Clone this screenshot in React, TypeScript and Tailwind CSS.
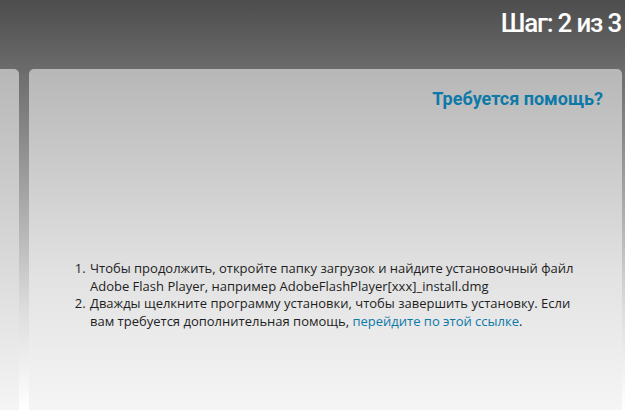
import React from "react";

export default function App() {
  return (
    <div className="w-[625px] h-[410px] overflow-hidden flex flex-col" style={{ fontFamily: "Roboto, 'Open Sans', sans-serif" }}>
      <header className="h-[69px] shrink-0 bg-gradient-to-b from-[#4d4d4d] to-[#6b6b6b] flex justify-end items-start pt-[8px] pr-[4px]">
        <h1 className="text-white text-[26px] leading-[30px] font-medium tracking-[-1.2px]" style={{ fontFamily: "Roboto, sans-serif" }}>
          Шаг: 2 из 3
        </h1>
      </header>
      <div className="flex-1 flex gap-[10px] pr-[3px] bg-gradient-to-b from-[#6b6b6b] via-[#dcdcdc] via-70% to-[#ffffff]">
        <div className="w-[19px] shrink-0 rounded-tr-[5px] bg-gradient-to-b from-[#b7b7b7] to-[#f5f5f5]" />
        <main className="flex-1 rounded-t-[5px] bg-gradient-to-b from-[#b7b7b7] via-[#e2e2e2] via-60% to-[#f5f5f5] flex flex-col pr-[19px] pt-[19px]">
          <div className="flex justify-end">
            <a className="text-[#0c79a8] text-[18px] leading-[21px] font-bold" style={{ fontFamily: "Roboto, sans-serif" }}>
              Требуется помощь?
            </a>
          </div>
          <ol
            className="list-decimal mt-[151px] pl-[60px] pr-[20px] text-[13px] leading-[17.5px] text-[#1e1e1e]"
            style={{ fontFamily: "'Open Sans', sans-serif" }}
          >
            <li className="pl-[1px]">
              Чтобы продолжить, откройте папку загрузок и найдите установочный файл Adobe Flash Player, например AdobeFlashPlayer[xxx]_install.dmg
            </li>
            <li className="pl-[1px]">
              Дважды щелкните программу установки, чтобы завершить установку. Если вам требуется дополнительная помощь,{" "}
              <a className="text-[#0c79a8]">перейдите по этой ссылке</a>.
            </li>
          </ol>
        </main>
      </div>
    </div>
  );
}
